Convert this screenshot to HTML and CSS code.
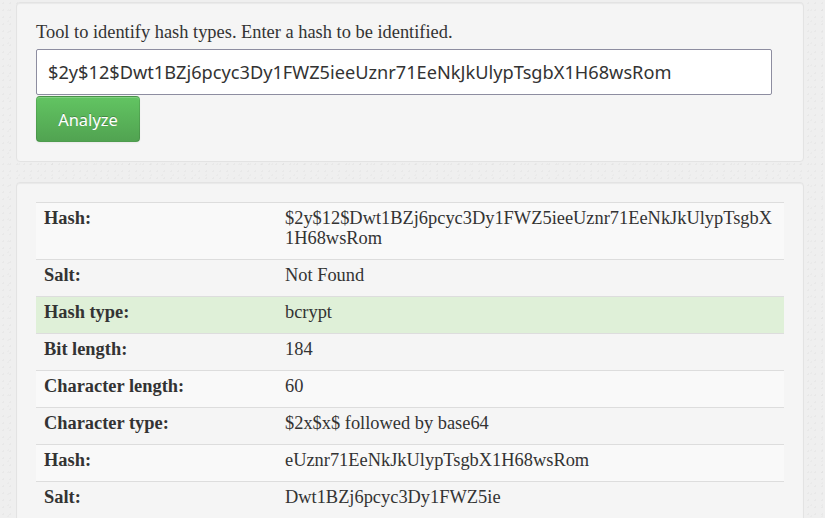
FILE: index.html
```html
<!DOCTYPE html>
<html>
<head>
<meta charset="utf-8">
<title>Hash Identifier</title>
<link rel="stylesheet" href="styles.css">
</head>
<body>
<div class="page">
  <div class="well well-form">
    <p class="intro">Tool to identify hash types. Enter a hash to be identified.</p>
    <input class="hash-input" type="text" value="$2y$12$Dwt1BZj6pcyc3Dy1FWZ5ieeUznr71EeNkJkUlypTsgbX1H68wsRom">
    <button class="btn-analyze" type="button">Analyze</button>
  </div>
  <div class="well well-result">
    <table class="result-table">
      <tbody>
        <tr><th>Hash:</th><td class="breakable">$2y$12$Dwt1BZj6pcyc3Dy1FWZ5ieeUznr71EeNkJkUlypTsgbX1H68wsRom</td></tr>
        <tr><th>Salt:</th><td>Not Found</td></tr>
        <tr class="success"><th>Hash type:</th><td>bcrypt</td></tr>
        <tr><th>Bit length:</th><td>184</td></tr>
        <tr><th>Character length:</th><td>60</td></tr>
        <tr><th>Character type:</th><td>$2x$x$ followed by base64</td></tr>
        <tr><th>Hash:</th><td>eUznr71EeNkJkUlypTsgbX1H68wsRom</td></tr>
        <tr><th>Salt:</th><td>Dwt1BZj6pcyc3Dy1FWZ5ie</td></tr>
      </tbody>
    </table>
  </div>
</div>
</body>
</html>
```
FILE: styles.css
```css
html, body {
  margin: 0;
  padding: 0;
}
body {
  background-color: #efefef;
  background-image:
    radial-gradient(rgba(0,0,0,0.03) 1px, transparent 1px),
    radial-gradient(rgba(0,0,0,0.02) 1px, transparent 1px);
  background-size: 7px 7px, 11px 11px;
  background-position: 0 0, 3px 5px;
  font-family: "Liberation Serif", "Times New Roman", serif;
  font-size: 18.4px;
  line-height: 20px;
  color: #333;
  height: 518px;
  overflow: hidden;
}
.page {
  padding: 2px 21px 0 16px;
}
.well {
  background: #f5f5f5;
  border: 1px solid #e3e3e3;
  border-radius: 4px;
  padding: 19px;
  box-shadow: inset 0 1px 1px rgba(0,0,0,0.05);
}
.well-form {
  margin-bottom: 20px;
  display: flex;
  flex-direction: column;
  align-items: flex-start;
}
.intro {
  margin: 0 0 7px;
}
.hash-input {
  box-sizing: border-box;
  width: 736px;
  height: 46px;
  margin: 0 0 1px;
  padding: 0 11px;
  border: 1px solid #8d8da0;
  border-radius: 2px;
  background: #fff;
  font-family: "Noto Sans", "DejaVu Sans", sans-serif;
  font-size: 18.2px;
  color: #333;
  outline: none;
}
.btn-analyze {
  box-sizing: border-box;
  width: 104px;
  height: 46px;
  border: 1px solid rgba(0,0,0,0.1);
  border-bottom-color: rgba(0,0,0,0.2);
  border-radius: 4px;
  background: linear-gradient(#62c462, #51a351);
  color: #fff;
  text-shadow: 0 -1px 0 rgba(0,0,0,0.25);
  font-family: "Noto Sans", "DejaVu Sans", sans-serif;
  font-size: 16.5px;
  padding: 0;
  box-shadow: inset 0 1px 0 rgba(255,255,255,0.2), 0 1px 2px rgba(0,0,0,0.05);
}
.result-table {
  width: 100%;
  border-collapse: collapse;
  border-spacing: 0;
  table-layout: fixed;
}
.result-table th,
.result-table td {
  padding: 5px 8px 11px;
  line-height: 20px;
  text-align: left;
  vertical-align: top;
  border-top: 1px solid #ddd;
}
.result-table th {
  width: 225px;
  font-weight: bold;
}
.result-table tr:nth-child(odd) > th,
.result-table tr:nth-child(odd) > td {
  background: #f9f9f9;
}
.result-table tr.success > th,
.result-table tr.success > td {
  background: #dff0d8;
}
.breakable {
  word-break: break-all;
}
```
